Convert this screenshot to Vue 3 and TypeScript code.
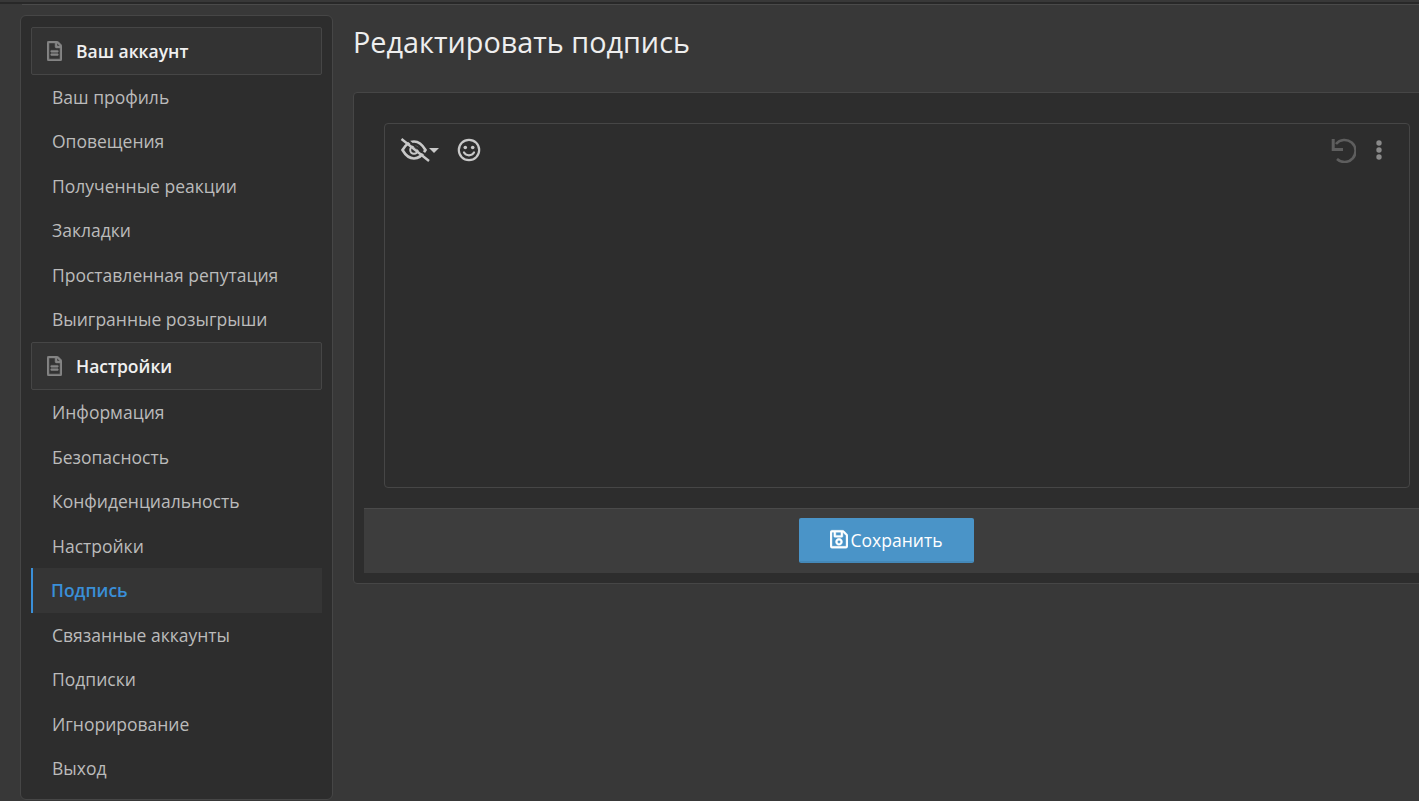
<template>
  <div class="page">
    <div class="top-strip"></div>
    <div class="top-line"></div>
    <div class="layout">
      <nav class="side-nav">
        <div v-for="group in groups" :key="group.title" class="nav-group">
          <h3 class="nav-header">
            <svg class="nav-icon" viewBox="0 0 384 512">
              <path fill="currentColor" stroke="currentColor" stroke-width="14" d="M369.900 97.900L286 14C277 5 264.800-.1 252.100-.1H48C21.500 0 0 21.500 0 48v416c0 26.500 21.500 48 48 48h288c26.500 0 48-21.500 48-48V131.900c0-12.700-5.100-25-14.100-34zM332.100 128H256V51.900l76.100 76.100zM48 464V48h160v104c0 13.300 10.700 24 24 24h104v288H48zm240-212v24c0 6.600-5.400 12-12 12H108c-6.600 0-12-5.400-12-12v-24c0-6.600 5.400-12 12-12h168c6.600 0 12 5.400 12 12zm0 84v24c0 6.600-5.400 12-12 12H108c-6.600 0-12-5.400-12-12v-24c0-6.600 5.400-12 12-12h168c6.600 0 12 5.400 12 12z" />
            </svg>
            {{ group.title }}
          </h3>
          <a
            v-for="item in group.items"
            :key="item"
            class="nav-link"
            :class="{ active: item === 'Подпись' }"
          >{{ item }}</a>
        </div>
      </nav>

      <main class="content">
        <h1 class="page-title">Редактировать подпись</h1>
        <form class="panel">
          <div class="editor">
            <div class="toolbar">
              <div class="toolbar-group">
                <span class="tool">
                  <svg viewBox="0 0 30 26" width="30" height="26">
                    <path fill="none" stroke="currentColor" stroke-width="2.600" d="M2.500 13C6 7 10 4.500 14 4.500S22 7 25.500 13C22 19 18 21.500 14 21.500S6 19 2.500 13Z" />
                    <circle cx="14" cy="13" r="3.800" fill="none" stroke="currentColor" stroke-width="2" />
                    <path fill="none" stroke="#2d2d2d" stroke-width="2.200" d="M3 -0.500L29 20.500" />
                    <path fill="none" stroke="currentColor" stroke-width="2.400" d="M1.500 2L29 24" />
                  </svg>
                  <i class="caret"></i>
                </span>
                <span class="tool">
                  <svg viewBox="0 0 24 24" width="24" height="24">
                    <circle cx="12" cy="12" r="10.200" fill="none" stroke="currentColor" stroke-width="2.200" />
                    <circle cx="8.300" cy="9.500" r="1.800" fill="currentColor" />
                    <circle cx="15.700" cy="9.500" r="1.800" fill="currentColor" />
                    <path fill="none" stroke="currentColor" stroke-width="2.200" stroke-linecap="round" d="M7 14.500C8.300 16.500 10 17.300 12 17.300S15.700 16.500 17 14.500" />
                  </svg>
                </span>
              </div>
              <div class="toolbar-group toolbar-right">
                <svg viewBox="0 0 26 26" width="26" height="26">
                  <path fill="none" stroke="currentColor" stroke-width="2.600" d="M6 7A11 11 0 1 1 7 22" />
                  <path fill="none" stroke="currentColor" stroke-width="3" d="M3.200 2V12.500H13" />
                </svg>
                <svg class="more" viewBox="0 0 6 22" width="6" height="22">
                  <circle cx="3" cy="4" r="2.700" fill="currentColor" />
                  <circle cx="3" cy="11" r="2.700" fill="currentColor" />
                  <circle cx="3" cy="18" r="2.700" fill="currentColor" />
                </svg>
              </div>
            </div>
          </div>
          <div class="form-footer">
            <button type="button" class="save-btn">
              <svg viewBox="0 0 448 512" width="18" height="20.500">
                <path fill="currentColor" stroke="currentColor" stroke-width="10" d="M433.900 129.900l-83.900-83.900A48 48 0 0 0 316.100 32H48C21.490 32 0 53.490 0 80v352c0 26.510 21.490 48 48 48h352c26.510 0 48-21.490 48-48V163.900a48 48 0 0 0-14.100-34zM272 80v80H144V80h128zm122 352H54a6 6 0 0 1-6-6V86a6 6 0 0 1 6-6h42v104c0 13.250 10.750 24 24 24h176c13.250 0 24-10.750 24-24V83.880l78.240 78.240a6 6 0 0 1 1.760 4.240V426a6 6 0 0 1-6 6zM224 232c-48.520 0-88 39.480-88 88s39.480 88 88 88 88-39.480 88-88-39.480-88-88-88zm0 128c-22.060 0-40-17.940-40-40s17.940-40 40-40 40 17.940 40 40-17.940 40-40 40z" />
              </svg>
              Сохранить
            </button>
          </div>
        </form>
      </main>
    </div>
  </div>
</template>

<script setup lang="ts">
interface NavGroup {
  title: string
  items: string[]
}

const groups: NavGroup[] = [
  {
    title: 'Ваш аккаунт',
    items: [
      'Ваш профиль',
      'Оповещения',
      'Полученные реакции',
      'Закладки',
      'Проставленная репутация',
      'Выигранные розыгрыши',
    ],
  },
  {
    title: 'Настройки',
    items: [
      'Информация',
      'Безопасность',
      'Конфиденциальность',
      'Настройки',
      'Подпись',
      'Связанные аккаунты',
      'Подписки',
      'Игнорирование',
      'Выход',
    ],
  },
]
</script>

<style scoped>
.page {
  width: 1419px;
  height: 801px;
  overflow: hidden;
  background: #383838;
  font-family: 'Open Sans', sans-serif;
  font-size: 17.5px;
  color: #c4c4c4;
}

.top-strip {
  height: 4px;
  box-sizing: border-box;
  background: #383838;
  border-bottom: 2px solid #282828;
}

.top-line {
  height: 1px;
  margin-left: 22px;
  background: #4a4a4a;
}

.layout {
  display: flex;
  align-items: flex-start;
  padding: 10px 0 0 20px;
  gap: 20px;
}

.side-nav {
  flex: 0 0 313px;
  box-sizing: border-box;
  padding: 11px 10px 10px 10px;
  height: 785px;
  background: #2d2d2d;
  border: 1px solid #464646;
  border-radius: 6px;
}

.nav-header {
  display: flex;
  align-items: center;
  height: 48px;
  margin: 0;
  padding-left: 15px;
  box-sizing: border-box;
  background: #333333;
  border: 1px solid #464646;
  border-radius: 2px;
  font-size: 17.5px;
  font-weight: 600;
  color: #f0f0f0;
}

.nav-group:first-child .nav-header {
  margin-bottom: -0.4px;
  padding-bottom: 1px;
}

.nav-group:last-child .nav-header {
  margin-bottom: 0.5px;
}

.nav-icon {
  width: 15px;
  height: 20px;
  margin-right: 14px;
  color: #858585;
}

.nav-link {
  display: block;
  height: 44.5px;
  line-height: 44.5px;
  padding-left: 21px;
  color: #bbbbbb;
}

.nav-link.active {
  padding-left: 18px;
  background: #353535;
  border-left: 2px solid #3a8fd8;
  color: #3a8fd8;
  font-weight: 600;
}

.content {
  flex: 1;
  min-width: 0;
}

.page-title {
  margin: 7px 0 30px 0;
  font-size: 28.8px;
  font-weight: 400;
  line-height: 40px;
  color: #eeeeee;
}

.panel {
  margin-right: -22px;
  box-sizing: border-box;
  height: 492px;
  padding: 30px 10px 10px 10px;
  background: #2d2d2d;
  border: 1px solid #464646;
  border-radius: 4px;
}

.editor {
  margin: 0 20px;
  height: 365px;
  box-sizing: border-box;
  border: 1px solid #464646;
  border-radius: 4px;
}

.toolbar {
  display: flex;
  justify-content: space-between;
  padding: 13px 27px 0 15px;
}

.toolbar-group {
  display: flex;
  align-items: center;
  gap: 18px;
  color: #c8c8c8;
}

.toolbar-right {
  gap: 20px;
  color: #5e5e5e;
}

.more {
  color: #8a8a8a;
}

.tool {
  display: flex;
  align-items: center;
}

.caret {
  width: 0;
  height: 0;
  margin-left: -1px;
  border-left: 5px solid transparent;
  border-right: 5px solid transparent;
  border-top: 5px solid #c8c8c8;
}

.form-footer {
  display: flex;
  justify-content: center;
  align-items: center;
  height: 65px;
  margin-top: 20px;
  padding-right: 22px;
  padding-bottom: 1px;
  background: #3d3d3d;
  border-top: 1px solid #4a4a4a;
  box-sizing: border-box;
}

.save-btn {
  display: flex;
  align-items: center;
  justify-content: center;
  gap: 3px;
  width: 175px;
  height: 45px;
  padding: 0;
  background: #4a94c8;
  border: none;
  border-bottom: 2px solid #4488b8;
  border-radius: 2px;
  color: #ffffff;
  font-family: inherit;
  font-size: 17.5px;
}
</style>

<style>
body {
  margin: 0;
  overflow: hidden;
  background: #383838;
}
</style>
